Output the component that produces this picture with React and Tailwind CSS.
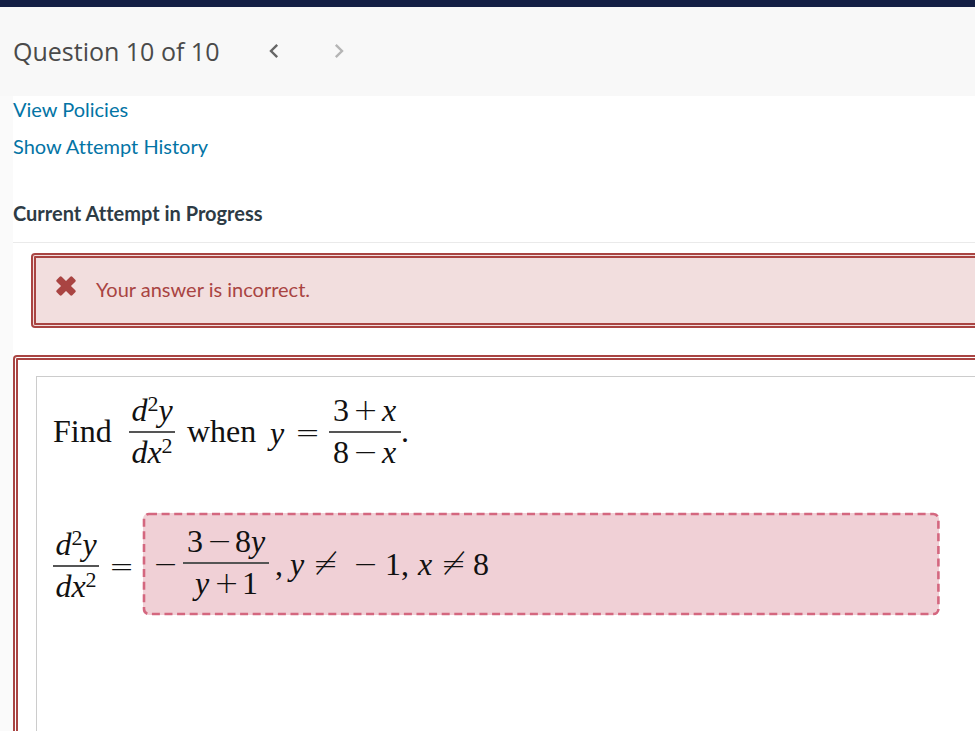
import React from "react";

function Op({ children }) {
  return (
    <span className="inline-block w-6 text-center font-['DejaVu_Sans_Light','DejaVu_Sans',sans-serif] text-[30px] leading-8 font-extralight">
      {children}
    </span>
  );
}

function Var({ children }) {
  return <i className="inline-block w-4 text-center">{children}</i>;
}

function Fraction({ top, bottom, width }) {
  return (
    <span className={`inline-flex flex-col text-center ${width}`}>
      <span className="flex h-10 items-center justify-center whitespace-nowrap border-b-2 border-[#555] pb-1">{top}</span>
      <span className="flex h-10 items-center justify-center whitespace-nowrap pb-0.5">{bottom}</span>
    </span>
  );
}

function Exponent() {
  return <span className="-mt-3 text-[22px] leading-6">2</span>;
}

function SecondDerivative() {
  return (
    <Fraction
      width="w-[46px]"
      top={<><i>d</i><Exponent /><i>y</i></>}
      bottom={<><i>d</i><i>x</i><Exponent /></>}
    />
  );
}

export default function App() {
  return (
    <div className="flex h-screen flex-col overflow-hidden bg-[#fafafa] font-['Lato',sans-serif] text-[20px] leading-6 text-[#2d3b45] [font-variant-ligatures:none]">
      <div className="h-[7px] shrink-0 bg-[#141f45]" />
      <header className="flex h-[89px] shrink-0 items-center bg-[#f8f8f8] pl-[13px] font-['Open_Sans',sans-serif]">
        <h1 className="w-[255px] pb-0.5 text-[25px] leading-8 text-[#4a4a4a]">Question 10 of 10</h1>
        <nav className="flex gap-[53px]">
          <button aria-label="Previous question" className="h-6 w-3 text-[#666]">
            <svg viewBox="0 0 12 24" className="h-6 w-3" fill="none" stroke="currentColor" strokeWidth="2.4">
              <path d="M9.2 4.8 3 11l6.2 6.2" />
            </svg>
          </button>
          <button aria-label="Next question" disabled className="h-6 w-3 text-[#b5b5b5]">
            <svg viewBox="0 0 12 24" className="h-6 w-3" fill="none" stroke="currentColor" strokeWidth="2.4">
              <path d="M2.8 4.8 9 11l-6.2 6.2" />
            </svg>
          </button>
        </nav>
      </header>

      <main className="ml-[13px] flex grow flex-col bg-white">
        <div className="flex flex-col items-start gap-[13px] pt-px text-[#0374a5]">
          <a href="#policies">View Policies</a>
          <a href="#history">Show Attempt History</a>
        </div>
        <h2 className="mt-[43px] border-b border-[#eaeaea] pb-[17px] font-bold">Current Attempt in Progress</h2>

        <div
          role="alert"
          className="mt-2.5 -mr-2 ml-[18px] flex h-[75px] shrink-0 items-center gap-5 rounded-[4px] border-[5px] border-double border-[#a94442] bg-[#f2dede] pl-5 text-[#a94442]"
        >
          <svg viewBox="0 0 20 20" className="mb-2.5 h-5 w-5" fill="currentColor">
            <g transform="rotate(45 10 10)">
              <rect x="-1" y="6.5" width="22" height="7" rx="1.4" />
              <rect x="6.5" y="-1" width="7" height="22" rx="1.4" />
            </g>
          </svg>
          <p className="pb-1">Your answer is incorrect.</p>
        </div>

        <section className="mt-[27px] -mr-2 grow rounded-tl-[4px] border-[5px] border-b-0 border-double border-[#a94442] pt-4 pl-[18px]">
          <div className="h-full border-t border-l border-[#ccc] pt-4 pr-[39px] pl-4 font-['Liberation_Serif',serif] text-[32px] leading-9 text-[#111]">
            <div className="flex items-center gap-3">
              <span className="w-16 pb-1">Find</span>
              <SecondDerivative />
              <span className="w-[70px] pb-1">when</span>
              <span className="flex items-center gap-2.5">
                <Var>y</Var>
                <Op>=</Op>
                <Fraction
                  width="w-[72px]"
                  top={<span className="flex items-center gap-1">3<Op>+</Op><Var>x</Var></span>}
                  bottom={<span className="flex items-center gap-1">8<Op>−</Op><Var>x</Var></span>}
                />
              </span>
              <span className="-ml-3 pb-1">.</span>
            </div>

            <div className="mt-9 flex items-center gap-2.5">
              <span className="flex items-center gap-2.5 pt-2.5">
                <SecondDerivative />
                <Op>=</Op>
              </span>
              <div
                role="group"
                aria-label="Submitted answer"
                className="relative mt-1 flex h-[102px] grow items-center gap-1.5 rounded-[6px] bg-[#f0d0d6] pl-2.5"
              >
                <svg className="absolute inset-0 h-full w-full overflow-visible" aria-hidden="true">
                  <rect x="1" y="1" width="99.8%" height="98%" rx="5" fill="none" stroke="#d4677f" strokeWidth="2.6" strokeDasharray="8 4.6" />
                </svg>
                <Op>−</Op>
                <Fraction
                  width="w-[86px]"
                  top={<span className="flex items-center gap-1">3<Op>−</Op><span>8<i>y</i></span></span>}
                  bottom={<span className="flex items-center gap-1"><Var>y</Var><Op>+</Op>1</span>}
                />
                <span>,</span>
                <span className="flex items-center gap-2">
                  <Var>y</Var>
                  <Op>≠</Op>
                  <span className="flex items-center gap-2 pl-2">
                    <Op>−</Op>
                    <span>1,</span>
                  </span>
                  <Var>x</Var>
                  <Op>≠</Op>
                  <span>8</span>
                </span>
              </div>
            </div>
          </div>
        </section>
      </main>
    </div>
  );
}
